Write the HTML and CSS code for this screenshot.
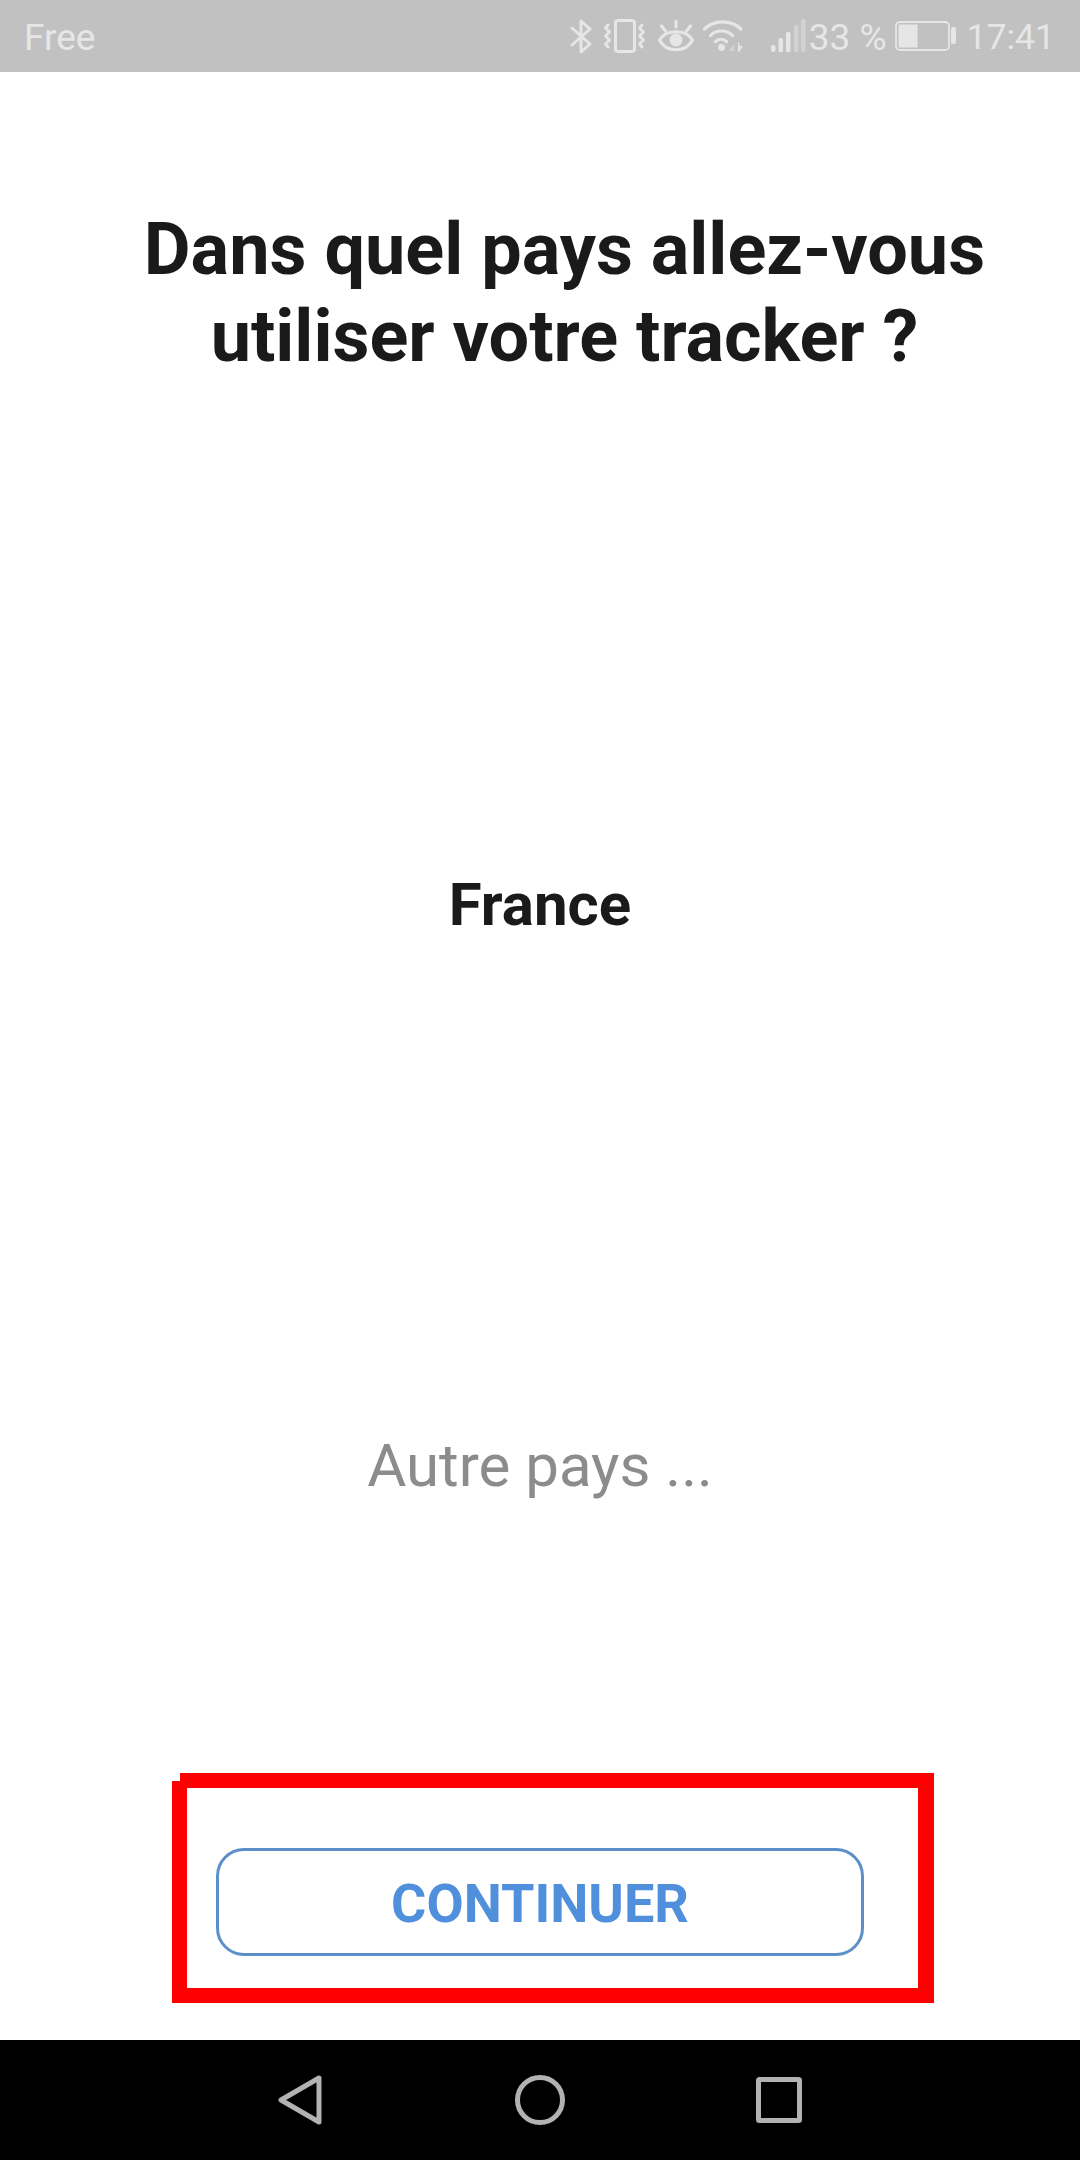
FILE: index.html
```html
<!DOCTYPE html>
<html lang="fr">
<head>
  <meta charset="UTF-8" />
  <meta name="viewport" content="width=device-width, initial-scale=1.0" />
  <title>Choix du pays</title>
  <link rel="stylesheet" href="styles.css">
</head>
<body>

  <header class="status-bar">
    <span class="carrier">Free</span>
    <div class="status-right">
      <!-- bluetooth -->
      <svg class="ico-bt" width="23" height="35" viewBox="0 0 23 35" fill="none" stroke="#e6e6e6" stroke-width="3" stroke-linecap="round" stroke-linejoin="round">
        <path d="M2 9 L20 25 L11 33 V2 L20 10 L2 26"/>
      </svg>
      <!-- vibrate -->
      <svg class="ico-vib" width="42" height="34" viewBox="0 0 42 34" fill="none" stroke="#e6e6e6" stroke-width="3" stroke-linecap="round" stroke-linejoin="round">
        <rect x="11.5" y="1.5" width="19" height="31" rx="2.5"/>
        <path d="M4 6 L1.5 9 L5.5 13 L1.5 17 L5.5 21 L1.5 25 L4 28"/>
        <path d="M38 6 L35.5 9 L39.5 13 L35.5 17 L39.5 21 L35.5 25 L38 28"/>
      </svg>
      <!-- eye comfort -->
      <svg class="ico-eye" width="36" height="32" viewBox="0 0 36 32" fill="none" stroke="#e6e6e6" stroke-width="3.2" stroke-linecap="round">
        <path d="M1.5 20 C8 9 28 9 34.5 20 C28 33 8 33 1.5 20 Z"/>
        <circle cx="18" cy="20" r="6.500" fill="#e6e6e6" stroke="none"/>
        <path d="M18 1.5 V7 M3.5 6 L7.5 11 M32.5 6 L28.500 11"/>
      </svg>
      <!-- wifi -->
      <svg class="ico-wifi" width="41" height="33" viewBox="0 0 41 33" fill="none" stroke="#e6e6e6" stroke-width="3.2" stroke-linecap="round">
        <path d="M1.500 9 C11 -0.500 28 -0.500 38 9"/>
        <path d="M7.500 15.500 C13 9.500 24 9.500 29.500 15.500"/>
        <path d="M12.500 21.500 C15.500 18.500 20.500 18.500 23.500 21.500"/>
        <circle cx="18.500" cy="27.500" r="3.400" fill="#e6e6e6" stroke="none"/>
        <path d="M31 24 L26 31 H31 Z" fill="#d4d4d4" stroke="none"/>
        <path d="M35 23 H36.500 V26 H40 L36 32 L35 32 Z" fill="#e6e6e6" stroke="none"/>
      </svg>
      <!-- signal -->
      <svg class="ico-signal" width="35" height="34" viewBox="0 0 35 34">
        <rect x="0" y="26" width="4.500" height="7" rx="2.200" fill="#e6e6e6"/>
        <rect x="7.500" y="19" width="4.500" height="14" rx="1.500" fill="#e6e6e6"/>
        <rect x="15" y="13" width="4.500" height="20" rx="1.500" fill="#e6e6e6"/>
        <rect x="23" y="6" width="4.500" height="27" rx="1.500" fill="#d2d2d2"/>
        <rect x="30" y="0" width="4.500" height="33" rx="1.500" fill="#d2d2d2"/>
      </svg>
      <span class="status-text pct">33 %</span>
      <!-- battery -->
      <svg class="ico-batt" width="61" height="30" viewBox="0 0 61 30">
        <rect x="1" y="1" width="53" height="28" rx="4" fill="none" stroke="#e6e6e6" stroke-width="1.800"/>
        <rect x="3.500" y="3.500" width="19" height="23" fill="#e6e6e6"/>
        <rect x="56" y="6" width="5" height="17" rx="2" fill="#e6e6e6"/>
      </svg>
      <span class="status-text clock">17:41</span>
    </div>
  </header>

  <main class="screen">
    <h1 class="title">Dans quel pays allez-vous<br>utiliser votre tracker ?</h1>
    <div class="country selected">France</div>
    <div class="country other">Autre pays ...</div>

    <div class="highlight">
      <button class="btn-continue" type="button">CONTINUER</button>
    </div>
  </main>

  <nav class="nav-bar">
    <svg width="44" height="50" viewBox="0 0 44 50" fill="none" stroke="#b2b2b2" stroke-width="5" stroke-linejoin="round">
      <path d="M41 3 V47 L3 25 Z"/>
    </svg>
    <svg class="nav-home" width="50" height="50" viewBox="0 0 50 50" fill="none" stroke="#b2b2b2" stroke-width="5">
      <circle cx="25" cy="25" r="22.500"/>
    </svg>
    <svg width="46" height="46" viewBox="0 0 46 46" fill="none" stroke="#b2b2b2" stroke-width="5" stroke-linejoin="round">
      <rect x="2.500" y="2.500" width="41" height="41" rx="1"/>
    </svg>
  </nav>

</body>
</html>
```

FILE: styles.css
```css
* {
  box-sizing: border-box;
}

body {
  margin: 0;
  width: 1080px;
  height: 2160px;
  background: #fff;
  font-family: Roboto, sans-serif;
  display: flex;
  flex-direction: column;
  overflow: hidden;
}

.status-bar {
  height: 72px;
  flex: none;
  background: #c1c1c1;
  color: #e6e6e6;
  font-size: 35.5px;
  display: flex;
  align-items: center;
  justify-content: space-between;
  padding: 0 25px 0 24px;
}

.status-right {
  display: flex;
  align-items: center;
}

.carrier {
  font-size: 37px;
  padding-top: 2px;
}

.status-text {
  padding-top: 2px;
}

.ico-vib {
  margin-left: 11px;
}

.ico-eye {
  margin-left: 12px;
}

.ico-wifi {
  margin-left: 9px;
}

.ico-signal {
  margin-left: 27px;
}

.pct {
  margin-left: 3px;
  font-size: 37px;
}

.ico-batt {
  margin-left: 8px;
}

.clock {
  margin-left: 11px;
}

.screen {
  flex: 1;
  display: flex;
  flex-direction: column;
  align-items: center;
}

.title {
  margin: 134px 0 0 49px;
  font-size: 72px;
  line-height: 87px;
  font-weight: 700;
  color: #1a1a1a;
  text-align: center;
}

.country {
  text-align: center;
}

.selected {
  margin-top: 490px;
  font-size: 60px;
  line-height: 70px;
  font-weight: 700;
  color: #1a1a1a;
}

.other {
  margin-top: 491px;
  font-size: 60px;
  line-height: 70px;
  color: #8c8c8c;
}

.highlight {
  position: relative;
  margin-top: 272px;
  margin-left: 26px;
  width: 762px;
  height: 230px;
  border: solid #f00;
  border-width: 15px 16px 15px 15px;
  padding: 60px 0 0 29px;
}

/* small step in the top left corner of the drawn frame */
.highlight::before {
  content: "";
  position: absolute;
  left: -15px;
  top: -15px;
  width: 8px;
  height: 8px;
  background: #fff;
}

.btn-continue {
  display: block;
  width: 648px;
  height: 108px;
  padding: 3px 0 0;
  background: #fff;
  border: 3px solid #5b8fc9;
  border-radius: 28px;
  color: #4f8fdc;
  font-family: Roboto, sans-serif;
  font-size: 54px;
  font-weight: 700;
}

.nav-bar {
  height: 120px;
  flex: none;
  background: #000;
  position: relative;
  display: grid;
  grid-template-columns: 44px 50px 46px;
  justify-content: space-between;
  align-items: center;
  padding: 0 278px 0 278px;
}

.nav-home {
  margin-left: 1px;
}
```
